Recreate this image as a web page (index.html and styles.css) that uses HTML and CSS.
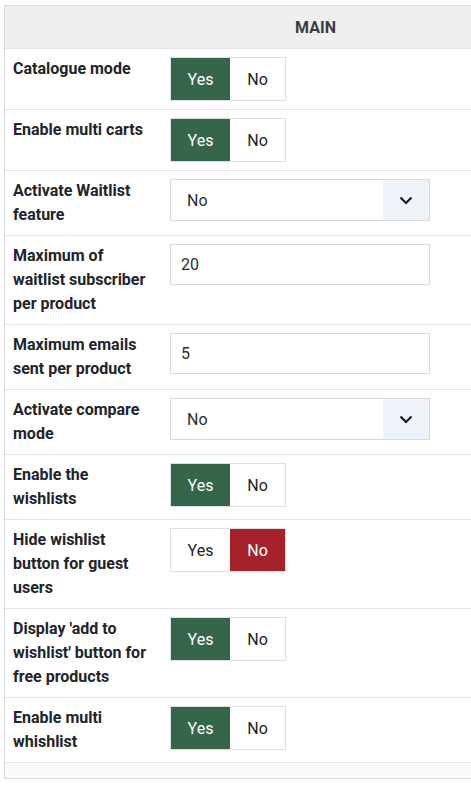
FILE: index.html
```html
<!DOCTYPE html>
<html>
<head>
<meta charset="utf-8">
<link rel="stylesheet" href="styles.css">
</head>
<body>
<div class="panel">
  <div class="head"><div></div><div class="head-title">MAIN</div></div>

  <div class="row">
    <div class="label">Catalogue mode</div>
    <div class="ctrl"><div class="toggle"><span class="seg on">Yes</span><span class="seg">No</span></div></div>
  </div>
  <div class="row">
    <div class="label">Enable multi carts</div>
    <div class="ctrl"><div class="toggle"><span class="seg on">Yes</span><span class="seg">No</span></div></div>
  </div>
  <div class="row">
    <div class="label">Activate Waitlist feature</div>
    <div class="ctrl"><div class="select"><span class="select-val">No</span><span class="select-arrow"><svg width="14" height="9" viewBox="0 0 14 9"><polyline points="1.5,1.5 7,7 12.5,1.5" fill="none" stroke="#111" stroke-width="2"/></svg></span></div></div>
  </div>
  <div class="row">
    <div class="label">Maximum of waitlist subscriber per product</div>
    <div class="ctrl"><div class="input">20</div></div>
  </div>
  <div class="row">
    <div class="label">Maximum emails sent per product</div>
    <div class="ctrl"><div class="input">5</div></div>
  </div>
  <div class="row">
    <div class="label">Activate compare mode</div>
    <div class="ctrl"><div class="select"><span class="select-val">No</span><span class="select-arrow"><svg width="14" height="9" viewBox="0 0 14 9"><polyline points="1.5,1.5 7,7 12.5,1.5" fill="none" stroke="#111" stroke-width="2"/></svg></span></div></div>
  </div>
  <div class="row">
    <div class="label">Enable the wishlists</div>
    <div class="ctrl"><div class="toggle"><span class="seg on">Yes</span><span class="seg">No</span></div></div>
  </div>
  <div class="row">
    <div class="label">Hide wishlist button for guest users</div>
    <div class="ctrl"><div class="toggle"><span class="seg">Yes</span><span class="seg off">No</span></div></div>
  </div>
  <div class="row">
    <div class="label">Display 'add to wishlist' button for free products</div>
    <div class="ctrl"><div class="toggle"><span class="seg on">Yes</span><span class="seg">No</span></div></div>
  </div>
  <div class="row">
    <div class="label">Enable multi whishlist</div>
    <div class="ctrl"><div class="toggle"><span class="seg on">Yes</span><span class="seg">No</span></div></div>
  </div>
  <div class="foot"></div>
</div>
</body>
</html>
```
FILE: styles.css
```css
html, body {
  margin: 0;
  padding: 0;
  background: #fff;
  overflow: hidden;
}
body {
  font-family: Roboto, "Liberation Sans", sans-serif;
  color: #25282b;
}
.panel {
  margin: 5px 0 0 4px;
  border: 1px solid #dcdcdc;
  border-right: none;
}
.head {
  display: grid;
  grid-template-columns: 157px 1fr;
  height: 42px;
  background: #efefef;
  border-bottom: 1px solid #e4e4e4;
  align-items: center;
}
.head-title {
  text-align: center;
  font-weight: 700;
  font-size: 16px;
  color: #3a3d42;
  padding-right: 2px;
}
.row {
  display: grid;
  grid-template-columns: 157px 1fr;
  border-bottom: 1px solid #e4e4e4;
}
.label {
  padding: 8px 8px;
  font-weight: 700;
  font-size: 16px;
  line-height: 24px;
  color: #212428;
}
.ctrl {
  padding: 8px 8px;
}
.toggle {
  display: inline-flex;
  height: 44px;
  box-sizing: border-box;
  border: 1px solid #dcdfe3;
  background: #fff;
}
.seg {
  display: flex;
  align-items: center;
  justify-content: center;
  font-size: 16px;
  color: #1d1f22;
}
.seg:first-child { width: 59px; }
.seg:last-child { width: 55px; }
.seg.on {
  background: #35664a;
  color: #fff;
}
.seg.off {
  background: #a5222a;
  color: #fff;
}
.select {
  display: flex;
  width: 260px;
  height: 42px;
  box-sizing: border-box;
  border: 1px solid #d6dae0;
  background: #fff;
}
.select-val {
  flex: 1;
  display: flex;
  align-items: center;
  padding-left: 16px;
  font-size: 16px;
  color: #2b2d30;
}
.select-arrow {
  width: 46px;
  background: #eef3fa;
  display: flex;
  align-items: center;
  justify-content: center;
}
.input {
  width: 260px;
  height: 41px;
  box-sizing: border-box;
  border: 1px solid #d6dae0;
  display: flex;
  align-items: center;
  padding-left: 10px;
  font-size: 16px;
  color: #2b2d30;
}
.foot {
  height: 15px;
  background: #fafafa;
}
```
